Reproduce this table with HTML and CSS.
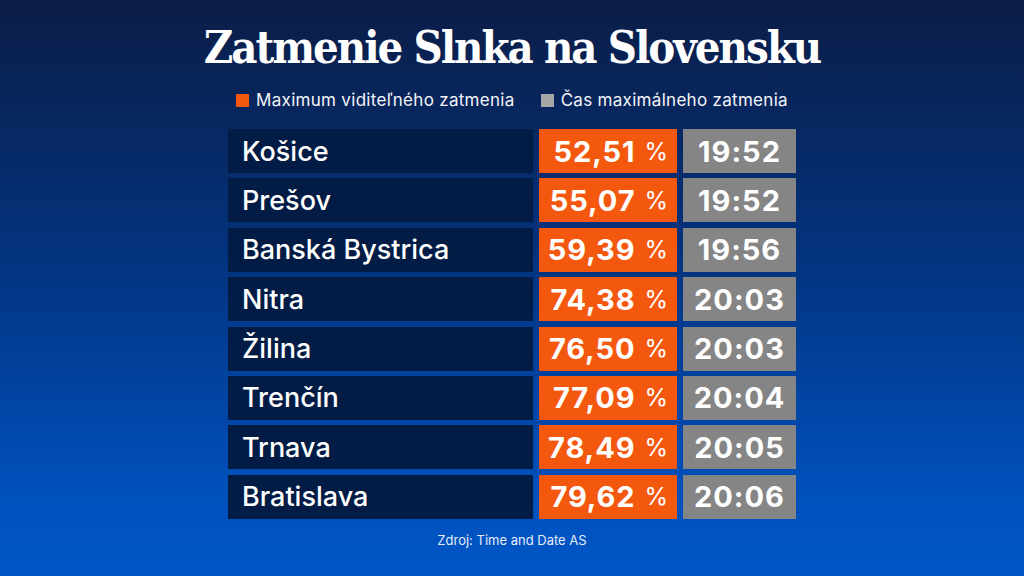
FILE: index.html
```html
<!DOCTYPE html>
<html lang="sk">
<head>
<meta charset="utf-8">
<title>Zatmenie Slnka na Slovensku</title>
<link rel="stylesheet" href="styles.css">
</head>
<body>
<main class="page">
  <h1 class="title">Zatmenie Slnka na Slovensku</h1>
  <div class="legend">
    <span class="legend-item"><span class="swatch swatch-orange"></span>Maximum viditeľného zatmenia</span>
    <span class="legend-item"><span class="swatch swatch-gray"></span>Čas maximálneho zatmenia</span>
  </div>
  <div class="table">
    <div class="name">Košice</div><div class="pct">52,51<span class="sign">%</span></div><div class="time">19:52</div>
    <div class="name">Prešov</div><div class="pct">55,07<span class="sign">%</span></div><div class="time">19:52</div>
    <div class="name">Banská Bystrica</div><div class="pct">59,39<span class="sign">%</span></div><div class="time">19:56</div>
    <div class="name">Nitra</div><div class="pct">74,38<span class="sign">%</span></div><div class="time">20:03</div>
    <div class="name">Žilina</div><div class="pct">76,50<span class="sign">%</span></div><div class="time">20:03</div>
    <div class="name">Trenčín</div><div class="pct">77,09<span class="sign">%</span></div><div class="time">20:04</div>
    <div class="name">Trnava</div><div class="pct">78,49<span class="sign">%</span></div><div class="time">20:05</div>
    <div class="name">Bratislava</div><div class="pct">79,62<span class="sign">%</span></div><div class="time">20:06</div>
  </div>
  <p class="source">Zdroj: Time and Date AS</p>
</main>
</body>
</html>
```
FILE: styles.css
```css
html, body {
  margin: 0;
  padding: 0;
}
body {
  width: 1024px;
  height: 576px;
  overflow: hidden;
  background: linear-gradient(180deg, #0b1d46 0%, #03337f 45%, #0050bb 85%, #0056c6 100%);
  color: #ffffff;
  font-family: Inter, "Open Sans", "Liberation Sans", sans-serif;
}
.page {
  display: flex;
  flex-direction: column;
  align-items: center;
}
.title {
  margin: 22px 0 0 0;
  font-family: "DejaVu Serif Condensed", "DejaVu Serif", serif;
  font-weight: bold;
  font-size: 45px;
  line-height: 52px;
  letter-spacing: -2px;
  color: #ffffff;
}
.legend {
  display: flex;
  gap: 26px;
  margin-top: 15px;
  font-size: 17px;
  line-height: 22px;
  letter-spacing: 0.3px;
  color: #f2f4f8;
}
.legend-item {
  display: flex;
  align-items: center;
  gap: 7px;
}
.swatch {
  width: 13px;
  height: 13px;
  display: inline-block;
}
.swatch-orange { background: #f4580f; }
.swatch-gray { background: #a6a6a6; }
.table {
  display: grid;
  grid-template-columns: 305px 138px 113px;
  grid-auto-rows: 44px;
  column-gap: 6px;
  row-gap: 5.4px;
  margin-top: 18px;
}
.name {
  background: #021c45;
  display: flex;
  align-items: center;
  padding-left: 14px;
  font-size: 27px;
  font-weight: 500;
}
.pct {
  background: #f4580f;
  display: flex;
  align-items: center;
  justify-content: flex-end;
  padding-right: 9px;
  font-size: 29px;
  font-weight: 700;
  letter-spacing: 0.9px;
}
.sign {
  font-weight: 400;
  font-size: 24px;
  margin-left: 9px;
  letter-spacing: 0;
}
.time {
  background: #858585;
  display: flex;
  align-items: center;
  justify-content: center;
  font-size: 29px;
  font-weight: 700;
  letter-spacing: 1px;
}
.source {
  margin: 12px 0 0 0;
  font-size: 13px;
  line-height: 18px;
  color: #e6ecf7;
}
```
